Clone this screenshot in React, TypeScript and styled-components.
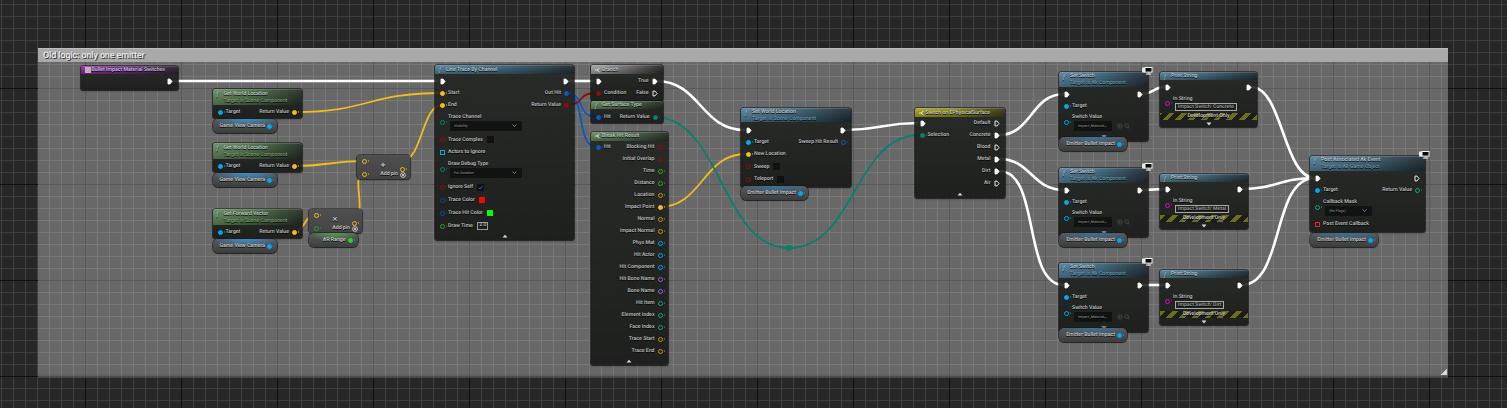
import React from "react";
import styled, { createGlobalStyle } from "styled-components";

const GlobalStyle = createGlobalStyle`
  html, body {
    margin: 0;
    background: #272727;
    overflow: hidden;
  }
`;

const Colors = {
  exec: "#ffffff",
  object: "#00a6ee",
  vector: "#f2bd1c",
  hit: "#0a58c8",
  bool: "#8a0f0f",
  byte: "#0a7f6c",
  float: "#2fa51c",
  color: "#0a4aa6",
  name: "#9a62d2",
  int: "#12a584",
  rotator: "#c8960f",
  magenta: "#d010c0",
};

const Shade = "linear-gradient(180deg, rgba(255, 255, 255, 0.06) 0%, rgba(0, 0, 0, 0.28) 100%)";

const Tones = {
  blue: `${Shade}, linear-gradient(90deg, #56859f 0%, #40697f 45%, #212e35 100%)`,
  green: `${Shade}, linear-gradient(90deg, #6a8f62 0%, #4d6e49 45%, #263026 100%)`,
  purple: `${Shade}, linear-gradient(90deg, #9330a8 0%, #722688 45%, #2d2433 100%)`,
  gray: `${Shade}, linear-gradient(90deg, #a8a8a8 0%, #767676 45%, #2b2b2b 100%)`,
  olive: `${Shade}, linear-gradient(90deg, #aeae26 0%, #8a8a20 45%, #3a3a18 100%)`,
};
type Tone = keyof typeof Tones;

const Canvas = styled.div`
  position: relative;
  width: 1507px;
  height: 408px;
  overflow: hidden;
  font-family: Roboto, "Liberation Sans", sans-serif;
  text-rendering: geometricPrecision;
  background-color: #272727;
  background-image: linear-gradient(#101010 1px, transparent 1px),
    linear-gradient(90deg, #101010 1px, transparent 1px),
    linear-gradient(#3e3e3e 1px, transparent 1px),
    linear-gradient(90deg, #3e3e3e 1px, transparent 1px);
  background-size: 96px 96px, 96px 96px, 12px 12px, 12px 12px;
  background-position: 0 88px, 85px 0, 0 4px, 1px 0;
`;

const CommentBox = styled.div`
  position: absolute;
  left: 38px;
  top: 48px;
  width: 1410px;
  height: 329px;
  background: rgba(255, 255, 255, 0.3);
  box-shadow: inset 0 -3px 3px -2px rgba(0, 0, 0, 0.2), 0 1px 0 rgba(255, 255, 255, 0.15);
`;

const CommentTitle = styled.div`
  height: 14px;
  line-height: 15px;
  padding-left: 5px;
  background: #a9a9a9;
  border-top: 1px solid #bdbdbd;
  box-sizing: border-box;
  color: #ececec;
  font-size: 9px;
  font-weight: 500;
  letter-spacing: -0.13px;
  text-shadow: 1px 1px 0 #3a3a3a;
`;

const ResizeGrip = styled.div`
  position: absolute;
  right: 1px;
  bottom: 2px;
  width: 6px;
  height: 6px;
  background: linear-gradient(135deg, transparent 50%, #d6d6d6 50%);
`;

const WireLayer = styled.svg`
  position: absolute;
  left: 0;
  top: 0;
`;

const Node = styled.div<{ $x: number; $y: number; $w: number }>`
  position: absolute;
  left: ${(p) => p.$x}px;
  top: ${(p) => p.$y}px;
  width: ${(p) => p.$w}px;
  border-radius: 2px;
  background: linear-gradient(180deg, rgba(33, 36, 33, 0.9), rgba(22, 24, 22, 0.9));
  box-shadow: 0 0 0 0.6px #0c0c0c, 0 1px 2px rgba(0, 0, 0, 0.5);
  color: #c4c4c4;
  font-size: 5.2px;
  font-weight: 500;
  text-shadow: 0 0.5px 0 #000;
`;

const Header = styled.div<{ $tone: Tone; $h: number }>`
  display: flex;
  flex-direction: column;
  justify-content: center;
  box-sizing: border-box;
  height: ${(p) => p.$h}px;
  padding: 1px 0 0 11px;
  position: relative;
  background: ${(p) => Tones[p.$tone]};
  border-radius: 2px 2px 0 0;
  box-shadow: inset 0 1px 0 rgba(255, 255, 255, 0.14);
`;

const HeaderIcon = styled.span`
  position: absolute;
  left: 4px;
  top: 1.5px;
  font-size: 6px;
  line-height: 7px;
  font-style: italic;
  color: #9fc0d2;
`;

const Title = styled.div`
  line-height: 7px;
  color: #c6d0d2;
  white-space: nowrap;
`;

const Subtitle = styled.div<{ $tone: Tone }>`
  line-height: 7px;
  white-space: nowrap;
  color: ${(p) => (p.$tone === "green" ? "#7d9a72" : "#6f98ae")};
`;

const Body = styled.div<{ $top?: number; $bottom?: number }>`
  padding-top: ${(p) => p.$top ?? 1}px;
  padding-bottom: ${(p) => p.$bottom ?? 0}px;
`;

const Row = styled.div<{ $h?: number }>`
  display: flex;
  justify-content: space-between;
  align-items: center;
  height: ${(p) => p.$h ?? 12}px;
  padding: 0 5px;
  white-space: nowrap;
`;

const PinSide = styled.div<{ $right?: boolean }>`
  display: flex;
  align-items: center;
  gap: 3px;
  flex-direction: ${(p) => (p.$right ? "row-reverse" : "row")};
`;

const Dot = styled.span<{ $color: string; $on?: boolean; $square?: boolean }>`
  flex: none;
  display: block;
  position: relative;
  box-sizing: border-box;
  width: 5px;
  height: 5px;
  border: 1.2px solid ${(p) => p.$color};
  border-radius: ${(p) => (p.$square ? "0" : "50%")};
  background: ${(p) => (p.$on ? p.$color : "transparent")};
  &::after {
    content: "";
    display: ${(p) => (p.$square ? "none" : "block")};
    position: absolute;
    right: -3px;
    top: 0;
    border-left: 1.5px solid ${(p) => p.$color};
    border-top: 1.3px solid transparent;
    border-bottom: 1.3px solid transparent;
  }
`;

const Stacked = styled.div`
  display: flex;
  flex-direction: column;
  gap: 1px;
`;

const StackLabel = styled.span`
  line-height: 6px;
`;

const Dropdown = styled.div<{ $w: number }>`
  display: flex;
  align-items: center;
  justify-content: space-between;
  box-sizing: border-box;
  width: ${(p) => p.$w}px;
  height: 10px;
  margin-left: 2px;
  padding: 0 5px 0 4px;
  border-radius: 1px;
  background: #111212;
  color: #808080;
  font-size: 3.6px;
`;

const Check = styled.span`
  flex: none;
  width: 7px;
  height: 7px;
  margin-left: 1px;
  background: #101110;
  display: flex;
  align-items: center;
  justify-content: center;
`;

const Swatch = styled.span<{ $color: string }>`
  flex: none;
  width: 6px;
  height: 6px;
  margin-left: 1px;
  background: ${(p) => p.$color};
  box-shadow: 1px 0 0 #1a1a1a;
`;

const ValueBox = styled.span`
  box-sizing: border-box;
  padding: 0 1px 0 1.5px;
  border: 0.7px solid #9a9a9a;
  line-height: 5.5px;
  font-size: 5px;
  margin-left: 1px;
`;

const StringBox = styled.span`
  display: block;
  box-sizing: border-box;
  margin-left: 2px;
  padding: 0 2px;
  border: 0.7px solid #a8a8a8;
  line-height: 6px;
  font-size: 5.1px;
  color: #a4a4a4;
`;

const Chevron = styled.div<{ $h?: number }>`
  display: flex;
  justify-content: center;
  align-items: center;
  height: ${(p) => p.$h ?? 8}px;
`;

const DevStrip = styled.div`
  height: 7px;
  line-height: 7px;
  text-align: center;
  color: #d0d0d0;
  background: repeating-linear-gradient(-45deg, #6d6d20 0 4px, #1c1c18 4px 9px);
`;

const VarNode = styled.div<{ $x: number; $y: number; $w: number; $tint: string }>`
  position: absolute;
  left: ${(p) => p.$x}px;
  top: ${(p) => p.$y}px;
  width: ${(p) => p.$w}px;
  height: 14px;
  box-sizing: border-box;
  display: flex;
  align-items: center;
  justify-content: flex-end;
  gap: 2px;
  padding-right: 5px;
  border-radius: 5px;
  background: radial-gradient(ellipse 55% 60% at 52% 0, ${(p) => p.$tint} 0%, transparent 100%),
    linear-gradient(180deg, #54585a 0%, #474a4b 60%, #3b3d3d 100%);
  box-shadow: 0 0 0 0.6px #141414, 0 1px 1px rgba(0, 0, 0, 0.5);
  color: #cfcfcf;
  font-size: 5.2px;
  font-weight: 500;
  text-shadow: 0 0.5px 0 #000;
  white-space: nowrap;
`;

const OpNode = styled.div<{ $x: number; $y: number }>`
  position: absolute;
  left: ${(p) => p.$x}px;
  top: ${(p) => p.$y}px;
  width: 53px;
  height: 24px;
  box-sizing: border-box;
  display: grid;
  grid-template-columns: 1fr auto 1fr;
  padding: 4px 5px 0;
  border-radius: 3px;
  background: linear-gradient(180deg, #4f4f4f 0%, #434343 100%);
  box-shadow: 0 0 0 0.6px #161616, 0 1px 2px rgba(0, 0, 0, 0.5);
  color: #d0d0d0;
  font-size: 5.2px;
  font-weight: 500;
  text-shadow: 0 0.5px 0 #000;
`;

const OpPins = styled.div`
  display: flex;
  flex-direction: column;
  gap: 8px;
`;

const OpGlyph = styled.div`
  font-size: 9px;
  line-height: 9px;
  padding-top: 3px;
  color: #c4c4c4;
`;

const AddPin = styled.div`
  position: absolute;
  right: 4px;
  bottom: 1px;
  display: flex;
  align-items: center;
  gap: 1.5px;
  line-height: 7px;
  white-space: nowrap;
`;

const Knot = styled.span`
  position: absolute;
  left: 786px;
  top: 245px;
  width: 6px;
  height: 6px;
  border-radius: 50%;
  background: ${Colors.byte};
`;

const TargetBadge = styled.svg`
  position: absolute;
  right: -5px;
  top: -5px;
`;

// ---- small drawings

const ExecPin = ({ on }: { on?: boolean }) => (
  <svg width="6" height="7" viewBox="0 0 6 7" style={{ flex: "none" }}>
    <path d="M1 1.1H3L5 3.5 3 5.9H1Z" fill={on ? "#fff" : "none"} stroke="#fff" strokeWidth="0.9" />
  </svg>
);

const ChevronUp = () => (
  <svg width="6" height="4" viewBox="0 0 6 4">
    <path d="M0.5 3.5 3 0.8 5.5 3.5Z" fill="#d8d8d8" />
  </svg>
);

const ChevronDown = () => (
  <svg width="6" height="4" viewBox="0 0 6 4">
    <path d="M0.5 0.6 3 3.4 5.5 0.6Z" fill="#d8d8d8" />
  </svg>
);

const Caret = () => (
  <svg width="5" height="3" viewBox="0 0 5 3">
    <path d="M0.5 0.5 2.5 2.5 4.5 0.5" fill="none" stroke="#9a9a9a" strokeWidth="0.8" />
  </svg>
);

const Tick = () => (
  <svg width="5" height="5" viewBox="0 0 5 5">
    <path d="M0.8 2.8 2 4 4.4 1" fill="none" stroke="#1a6fd8" strokeWidth="1" />
  </svg>
);

const Monitor = () => (
  <TargetBadge width="11" height="8" viewBox="0 0 11 8">
    <rect x="0" y="0.5" width="3" height="5" fill="#e8e8e8" />
    <rect x="2.5" y="0" width="8" height="5.6" fill="#f2f2f2" />
    <rect x="3.5" y="1" width="6" height="3.6" fill="#0a0a0a" />
    <rect x="5.5" y="5.6" width="2" height="1" fill="#e0e0e0" />
    <rect x="4" y="6.6" width="5" height="1" fill="#f2f2f2" />
  </TargetBadge>
);

const ClearIcon = () => (
  <svg width="6" height="6" viewBox="0 0 6 6">
    <circle cx="3" cy="3" r="2.4" fill="none" stroke="#d8d8d8" strokeWidth="0.8" />
    <path d="M1.7 1.7 4.3 4.3M4.3 1.7 1.7 4.3" stroke="#d8d8d8" strokeWidth="0.8" />
  </svg>
);

const AssetIcons = () => (
  <svg width="13" height="6" viewBox="0 0 13 6" style={{ marginLeft: 2 }}>
    <circle cx="3" cy="3" r="2.2" fill="none" stroke="#4c4c4c" strokeWidth="0.8" />
    <path d="M2.3 1.8 4 3 2.3 4.2Z" fill="#4c4c4c" />
    <circle cx="9.6" cy="2.6" r="1.8" fill="none" stroke="#4c4c4c" strokeWidth="0.8" />
    <path d="M11 4 12.4 5.5" stroke="#4c4c4c" strokeWidth="0.8" />
  </svg>
);

// ---- pins and rows

type PinProps = {
  label?: string;
  color?: string;
  on?: boolean;
  exec?: boolean;
  square?: boolean;
  right?: boolean;
  children?: React.ReactNode;
};

const Pin = ({ label, color, on, exec, square, right, children }: PinProps) => (
  <PinSide $right={right}>
    {exec ? <ExecPin on={on} /> : <Dot $color={color ?? "#fff"} $on={on} $square={square} />}
    {label && <span>{label}</span>}
    {children}
  </PinSide>
);

const DropdownPin = ({ label, value, color, w, children }: { label: string; value: string; color: string; w: number; children?: React.ReactNode }) => (
  <PinSide>
    <Dot $color={color} />
    <Stacked>
      <StackLabel>{label}</StackLabel>
      <PinSide>
        <Dropdown $w={w}>
          {value}
          <Caret />
        </Dropdown>
        {children}
      </PinSide>
    </Stacked>
  </PinSide>
);

const BranchIcon = () => (
  <HeaderIcon>
    <svg width="6" height="6" viewBox="0 0 6 6">
      <path d="M0 3H2L4.5 1M2 3 4.5 5" fill="none" stroke="#e4e4e4" strokeWidth="1" />
    </svg>
  </HeaderIcon>
);

type ShellProps = {
  x: number;
  y: number;
  w: number;
  tone: Tone;
  h: number;
  title: string;
  subtitle?: string;
  icon?: React.ReactNode;
  children: React.ReactNode;
};

const Shell = ({ x, y, w, tone, h, title, subtitle, icon, children }: ShellProps) => (
  <Node $x={x} $y={y} $w={w}>
    <Header $tone={tone} $h={h}>
      {icon ?? <HeaderIcon>ƒ</HeaderIcon>}
      <Title>{title}</Title>
      {subtitle && <Subtitle $tone={tone}>{subtitle}</Subtitle>}
    </Header>
    {children}
  </Node>
);

const GetterNode = ({ y, title }: { y: number; title: string }) => (
  <>
    <Shell x={212.5} y={y} w={89.5} tone="green" h={16} title={title} subtitle="Target is Scene Component">
      <Body>
        <Row>
          <Pin label="Target" color={Colors.object} on />
          <Pin label="Return Value" color={Colors.vector} on right />
        </Row>
      </Body>
    </Shell>
    <VarNode $x={212.5} $y={y + 30} $w={64.5} $tint="#3f8ec4">
      Game View Camera
      <Dot $color={Colors.object} $on />
    </VarNode>
  </>
);

const SetSwitch = ({ y }: { y: number }) => (
  <>
    <Shell x={1059} y={y} w={89} tone="blue" h={15} title="Set Switch" subtitle="Target is Ak Component">
      <Monitor />
      <Body>
        <Row>
          <Pin exec on />
          <Pin exec on right />
        </Row>
        <Row>
          <Pin label="Target" color={Colors.object} on />
        </Row>
        <Row $h={21}>
          <DropdownPin label="Switch Value" value="Impact_Material" color={Colors.object} w={38}>
            <AssetIcons />
          </DropdownPin>
        </Row>
        <Chevron>
          <ChevronDown />
        </Chevron>
      </Body>
    </Shell>
    <VarNode $x={1059} $y={y + 65} $w={68} $tint="#3f6f94">
      Emitter Bullet Impact
      <Dot $color={Colors.object} $on />
    </VarNode>
  </>
);

const PrintString = ({ y, w, text }: { y: number; w: number; text: string }) => (
  <Shell x={1160} y={y} w={w} tone="blue" h={8} title="Print String">
    <Body>
      <Row>
        <Pin exec on />
        <Pin exec on right />
      </Row>
      <Row $h={20}>
        <PinSide>
          <Dot $color={Colors.magenta} />
          <Stacked>
            <StackLabel>In String</StackLabel>
            <StringBox>{text}</StringBox>
          </Stacked>
        </PinSide>
      </Row>
      <DevStrip>Development Only</DevStrip>
      <Chevron $h={7}>
        <ChevronDown />
      </Chevron>
    </Body>
  </Shell>
);

const breakRows: [string, string][] = [
  ["Initial Overlap", Colors.bool],
  ["Time", Colors.float],
  ["Distance", Colors.float],
  ["Location", Colors.rotator],
  ["Impact Point", Colors.vector],
  ["Normal", Colors.rotator],
  ["Impact Normal", Colors.rotator],
  ["Phys Mat", Colors.object],
  ["Hit Actor", Colors.object],
  ["Hit Component", Colors.object],
  ["Hit Bone Name", Colors.name],
  ["Bone Name", Colors.name],
  ["Hit Item", Colors.int],
  ["Element Index", Colors.int],
  ["Face Index", Colors.int],
  ["Trace Start", Colors.rotator],
  ["Trace End", Colors.rotator],
];

const switchRows: [string, boolean][] = [
  ["Blood", false],
  ["Metal", true],
  ["Dirt", true],
  ["Air", false],
];

// ---- wires

const link = (x1: number, y1: number, x2: number, y2: number, k?: number) => {
  const d = k ?? Math.max(Math.abs(x2 - x1) * 0.5, 12);
  return `M${x1} ${y1}C${x1 + d} ${y1} ${x2 - d} ${y2} ${x2} ${y2}`;
};

const wires: { d: string; color: string; width: number }[] = [
  { d: link(172, 81, 438, 81), color: "#fff", width: 2.6 },
  { d: link(568, 81, 595, 81), color: "#fff", width: 2.6 },
  { d: link(656, 81, 745, 130), color: "#fff", width: 2.6 },
  { d: link(845, 130, 918, 123), color: "#fff", width: 2.6 },
  { d: link(999, 135, 1064, 94), color: "#fff", width: 2.6 },
  { d: link(999, 159, 1064, 190), color: "#fff", width: 2.6 },
  { d: link(999, 171, 1064, 285, 42), color: "#fff", width: 2.6 },
  { d: link(1142, 94, 1165, 87), color: "#fff", width: 2.6 },
  { d: link(1142, 190, 1165, 189), color: "#fff", width: 2.6 },
  { d: link(1142, 285, 1165, 285), color: "#fff", width: 2.6 },
  { d: link(1251, 87, 1315, 178), color: "#fff", width: 2.6 },
  { d: link(1241, 189, 1315, 178), color: "#fff", width: 2.6 },
  { d: link(1241, 285, 1315, 178, 44), color: "#fff", width: 2.6 },
  { d: link(295, 112, 442, 93), color: Colors.vector, width: 1.8 },
  { d: link(295, 166, 364, 161), color: Colors.vector, width: 1.8 },
  { d: link(402, 161, 442, 105), color: Colors.vector, width: 1.8 },
  { d: link(293, 232, 316, 215), color: Colors.vector, width: 1.8 },
  { d: link(354, 215, 364, 174, 14), color: Colors.vector, width: 1.8 },
  { d: link(659, 207, 746, 154), color: Colors.vector, width: 1.8 },
  { d: link(565, 93, 597, 117, 22), color: Colors.hit, width: 1.8 },
  { d: link(565, 93, 597, 147, 22), color: Colors.hit, width: 1.8 },
  { d: link(565, 105, 597, 93, 22), color: Colors.bool, width: 1.8 },
  { d: link(654, 117, 789, 248, 68), color: Colors.byte, width: 1.8 },
  { d: link(789, 248, 920, 135, 66), color: Colors.byte, width: 1.8 },
  { d: link(348, 240, 316, 227, 22), color: "#22a612", width: 1.8 },
  { d: link(800, 193, 746, 142, 30), color: Colors.object, width: 1.4 },
  { d: link(1118, 144, 1066, 106, 30), color: Colors.object, width: 1.4 },
  { d: link(1118, 240, 1066, 202, 30), color: Colors.object, width: 1.4 },
  { d: link(1118, 336, 1066, 298, 30), color: Colors.object, width: 1.4 },
  { d: link(1370, 240, 1318, 190, 30), color: Colors.object, width: 1.4 },
];

export default function App() {
  return (
    <Canvas>
      <GlobalStyle />
      <CommentBox>
        <CommentTitle>Old logic: only one emitter</CommentTitle>
        <ResizeGrip />
      </CommentBox>

      <WireLayer width={1507} height={408}>
        {wires.map((w, i) => (
          <path key={i} d={w.d} fill="none" stroke={w.color} strokeWidth={w.width} />
        ))}
      </WireLayer>
      <Knot />

      <Shell
        x={80.5}
        y={65.5}
        w={97}
        tone="purple"
        h={8}
        title="Bullet Impact Material Switches"
        icon={
          <HeaderIcon>
            <svg width="6" height="6" viewBox="0 0 6 6">
              <rect width="6" height="6" fill="#c9a8cc" />
            </svg>
          </HeaderIcon>
        }
      >
        <Body $top={2} $bottom={2}>
          <Row>
            <span />
            <Pin exec on right />
          </Row>
        </Body>
      </Shell>

      <GetterNode y={89} title="Get World Location" />
      <GetterNode y={143} title="Get World Location" />
      <GetterNode y={209} title="Get Forward Vector" />

      <OpNode $x={356.5} $y={155}>
        <OpPins>
          <Dot $color={Colors.vector} />
          <Dot $color={Colors.vector} />
        </OpPins>
        <OpGlyph>+</OpGlyph>
        <PinSide $right>
          <Dot $color={Colors.vector} />
        </PinSide>
        <AddPin>
          Add pin
          <ClearIcon />
        </AddPin>
      </OpNode>

      <OpNode $x={308.5} $y={209}>
        <OpPins>
          <Dot $color={Colors.vector} />
          <Dot $color="#22a612" />
        </OpPins>
        <OpGlyph>×</OpGlyph>
        <PinSide $right>
          <Dot $color={Colors.vector} />
        </PinSide>
        <AddPin>
          Add pin
          <ClearIcon />
        </AddPin>
      </OpNode>
      <VarNode $x={308.5} $y={233} $w={49} $tint="#5a9a4e">
        AR Range
        <Dot $color="#2fd01c" $on />
      </VarNode>

      <Shell x={435} y={65} w={139} tone="blue" h={9} title="Line Trace By Channel">
        <Body>
          <Row>
            <Pin exec on />
            <Pin exec on right />
          </Row>
          <Row>
            <Pin label="Start" color={Colors.vector} on />
            <Pin label="Out Hit" color={Colors.hit} on right />
          </Row>
          <Row>
            <Pin label="End" color={Colors.vector} on />
            <Pin label="Return Value" color={Colors.bool} on right />
          </Row>
          <Row $h={22}>
            <DropdownPin label="Trace Channel" value="Visibility" color={Colors.byte} w={72} />
          </Row>
          <Row $h={13}>
            <Pin label="Trace Complex" color={Colors.bool}>
              <Check />
            </Pin>
          </Row>
          <Row>
            <Pin label="Actors to Ignore" color={Colors.object} square />
          </Row>
          <Row $h={22}>
            <DropdownPin label="Draw Debug Type" value="For Duration" color={Colors.byte} w={72} />
          </Row>
          <Row $h={14}>
            <Pin label="Ignore Self" color={Colors.bool}>
              <Check>
                <Tick />
              </Check>
            </Pin>
          </Row>
          <Row>
            <Pin label="Trace Color" color={Colors.color}>
              <Swatch $color="#ff0000" />
            </Pin>
          </Row>
          <Row $h={14}>
            <Pin label="Trace Hit Color" color={Colors.color}>
              <Swatch $color="#00ff00" />
            </Pin>
          </Row>
          <Row>
            <Pin label="Draw Time" color={Colors.float}>
              <ValueBox>3.0</ValueBox>
            </Pin>
          </Row>
          <Chevron>
            <ChevronUp />
          </Chevron>
        </Body>
      </Shell>

      <Shell x={591} y={65} w={71.5} tone="gray" h={9} title="Branch" icon={<BranchIcon />}>
        <Body $bottom={2}>
          <Row>
            <Pin exec on />
            <Pin label="True" exec on right />
          </Row>
          <Row>
            <Pin label="Condition" color={Colors.bool} on />
            <Pin label="False" exec right />
          </Row>
        </Body>
      </Shell>

      <Shell x={591} y={101} w={71.5} tone="green" h={8} title="Get Surface Type">
        <Body $top={2}>
          <Row>
            <Pin label="Hit" color={Colors.hit} on />
            <Pin label="Return Value" color={Colors.byte} on right />
          </Row>
        </Body>
      </Shell>

      <Shell x={591} y={131.5} w={76.5} tone="green" h={9} title="Break Hit Result" icon={<BranchIcon />}>
        <Body $top={0.5}>
          <Row>
            <Pin label="Hit" color={Colors.hit} on />
            <Pin label="Blocking Hit" color={Colors.bool} right />
          </Row>
          {breakRows.map(([label, color]) => (
            <Row key={label}>
              <span />
              <Pin label={label} color={color} right on={label === "Impact Point"} />
            </Row>
          ))}
          <Chevron>
            <ChevronUp />
          </Chevron>
        </Body>
      </Shell>

      <Shell x={741} y={108} w={110} tone="blue" h={14} title="Set World Location" subtitle="Target is Scene Component">
        <Body $top={2} $bottom={2}>
          <Row>
            <Pin exec on />
            <Pin exec on right />
          </Row>
          <Row>
            <Pin label="Target" color={Colors.object} on />
            <Pin label="Sweep Hit Result" color={Colors.hit} right />
          </Row>
          <Row>
            <Pin label="New Location" color={Colors.vector} on />
          </Row>
          <Row $h={13}>
            <Pin label="Sweep" color={Colors.bool}>
              <Check />
            </Pin>
          </Row>
          <Row>
            <Pin label="Teleport" color={Colors.bool}>
              <Check />
            </Pin>
          </Row>
        </Body>
      </Shell>
      <VarNode $x={741} $y={186} $w={67} $tint="#3f6f94">
        Emitter Bullet Impact
        <Dot $color={Colors.object} $on />
      </VarNode>

      <Shell x={914.5} y={108} w={90} tone="olive" h={9} title="Switch on EPhysicalSurface" icon={<BranchIcon />}>
        <Body $top={0}>
          <Row>
            <Pin exec on />
            <Pin label="Default" exec right />
          </Row>
          <Row>
            <Pin label="Selection" color={Colors.byte} on />
            <Pin label="Concrete" exec on right />
          </Row>
          {switchRows.map(([label, on]) => (
            <Row key={label}>
              <span />
              <Pin label={label} exec on={on} right />
            </Row>
          ))}
          <Chevron $h={9}>
            <ChevronUp />
          </Chevron>
        </Body>
      </Shell>

      <SetSwitch y={72} />
      <SetSwitch y={168} />
      <SetSwitch y={263} />

      <PrintString y={72} w={97} text="Impact Switch: Concrete" />
      <PrintString y={174} w={88} text="Impact Switch: Metal" />
      <PrintString y={270} w={88} text="Impact Switch: Dirt" />

      <Shell x={1310} y={156} w={115} tone="blue" h={15} title="Post Associated Ak Event" subtitle="Target is Ak Game Object">
        <Monitor />
        <Body $bottom={2}>
          <Row>
            <Pin exec on />
            <Pin exec right />
          </Row>
          <Row>
            <Pin label="Target" color={Colors.object} on />
            <Pin label="Return Value" color={Colors.int} right />
          </Row>
          <Row $h={22}>
            <DropdownPin label="Callback Mask" value="(No Flags)" color={Colors.int} w={47} />
          </Row>
          <Row>
            <Pin label="Post Event Callback" color="#ee2222" square />
          </Row>
        </Body>
      </Shell>
      <VarNode $x={1310} $y={233} $w={68} $tint="#3f6f94">
        Emitter Bullet Impact
        <Dot $color={Colors.object} $on />
      </VarNode>
    </Canvas>
  );
}
